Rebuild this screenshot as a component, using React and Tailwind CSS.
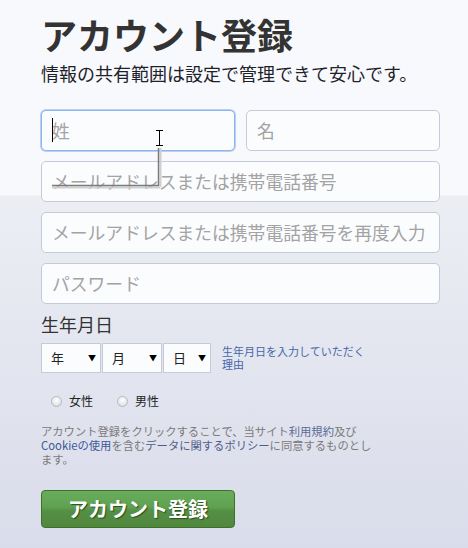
const jp = { fontFamily: '"Noto Sans CJK JP", "Noto Sans", sans-serif' };

function TextBox({ placeholder, focused, className = '' }) {
  return (
    <div
      className={`relative flex h-[41px] items-center rounded-[5px] border bg-[#fbfcfe] px-[10px] ${
        focused
          ? 'border-[#8fb3ea] shadow-[0_0_0_1px_#b9d0f3]'
          : 'border-[#c3cad8]'
      } ${className}`}
    >
      {focused && <span className="absolute left-[10px] top-[7px] h-[24px] w-px bg-black" />}
      <span className="whitespace-nowrap text-[17.8px] leading-none text-[#a3a3a3]">
        {placeholder}
      </span>
    </div>
  );
}

function DateSelect({ label, width }) {
  return (
    <div
      className={`flex h-[30px] items-center justify-between border border-[#c3cad8] bg-[#fbfcfe] pl-[9px] pr-[4px] ${width}`}
    >
      <span className="text-[13px] text-[#222]">{label}</span>
      <span className="text-[8px] text-black">▼</span>
    </div>
  );
}

function Radio({ label }) {
  return (
    <label className="flex items-center gap-[7px]">
      <span className="h-[11px] w-[11px] rounded-full border border-[#b5b8c0] bg-[radial-gradient(circle_at_50%_35%,#ffffff,#d6d8de)]" />
      <span className="text-[12px] text-[#222]">{label}</span>
    </label>
  );
}

export default function App() {
  return (
    <div
      style={jp}
      className="relative h-[548px] w-[468px] overflow-hidden bg-[linear-gradient(to_bottom,#f8f9fc_0px,#f8f9fc_195px,#eceef4_196px,#d9dcea_548px)] pl-[41px]"
    >
      <h1 className="pt-[11px] text-[36px] font-bold leading-[46px] text-[#333]">
        アカウント登録
      </h1>
      <p className="mt-[4px] text-[18px] leading-[24px] text-[#1d2129]">
        情報の共有範囲は設定で管理できて安心です。
      </p>

      <div className="mt-[25px] flex w-[399px] flex-col gap-[10px]">
        <div className="flex gap-[11px]">
          <TextBox placeholder="姓" focused className="w-[194px]" />
          <TextBox placeholder="名" className="w-[194px]" />
        </div>
        <TextBox placeholder="メールアドレスまたは携帯電話番号" />
        <TextBox placeholder="メールアドレスまたは携帯電話番号を再度入力" />
        <TextBox placeholder="パスワード" />
      </div>

      <div className="mt-[8px] text-[18px] leading-[24px] text-[#333]">生年月日</div>
      <div className="mt-[7px] flex items-start">
        <div className="flex gap-px">
          <DateSelect label="年" width="w-[60px]" />
          <DateSelect label="月" width="w-[60px]" />
          <DateSelect label="日" width="w-[48px]" />
        </div>
        <a className="ml-[11px] mt-[2px] text-[11px] leading-[13px] text-[#4766a8]">
          生年月日を入力していただく
          <br />
          理由
        </a>
      </div>

      <div className="ml-[10px] mt-[19px] flex gap-[24px]">
        <Radio label="女性" />
        <Radio label="男性" />
      </div>

      <p className="mt-[14px] w-[336px] text-[11.3px] leading-[14px] text-[#7a7a7a]">
        アカウント登録をクリックすることで、当サイト
        <span className="text-[#5a6a94]">利用規約</span>及び
        <span className="text-[#3b5998]">Cookieの使用</span>を含む
        <span className="text-[#4e5d88]">データに関するポリシー</span>
        に同意するものとします。
      </p>

      <button className="mt-[24px] flex h-[38px] w-[194px] items-center justify-center rounded-[4px] border border-[#3f7028] bg-[linear-gradient(to_bottom,#69ad5c_0%,#5fa150_45%,#558f45_55%,#4f883d_100%)] text-[20px] font-bold text-white [text-shadow:1px_1px_1px_#2c4f1c]">
        アカウント登録
      </button>

      {/* mouse pointer and drag trace over the form */}
      <svg
        className="pointer-events-none absolute left-0 top-0"
        width="468"
        height="548"
      >
        <path d="M156 130.5h7M159.5 130.5v15M156 145.5h7" stroke="#000" strokeWidth="1" fill="none" />
        <path d="M160.5 148v39M160 187.5H52" stroke="#cfcfcf" strokeWidth="2" fill="none" />
        <path d="M158.5 148v38M159 185.5H52" stroke="#7b7b7b" strokeWidth="1.5" fill="none" />
      </svg>
    </div>
  );
}
